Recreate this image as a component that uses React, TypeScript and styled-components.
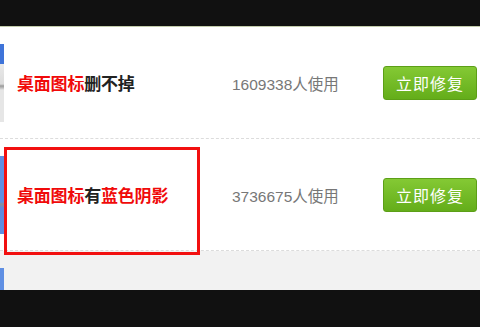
import React from "react";
import styled, { createGlobalStyle } from "styled-components";

const GlobalStyle = createGlobalStyle`
  html, body {
    margin: 0;
    padding: 0;
    background: #111;
  }
  * {
    box-sizing: border-box;
  }
`;

const Page = styled.div`
  width: 480px;
  height: 327px;
  display: flex;
  flex-direction: column;
  overflow: hidden;
  background: #fff;
  font-family: "Noto Sans CJK SC", "Liberation Sans", sans-serif;
`;

const TopBar = styled.div`
  height: 27px;
  flex: none;
  background: #111;
  border-bottom: 1px solid #c3ccab;
`;

const BottomBar = styled.div`
  height: 37px;
  flex: none;
  background: #111;
`;

const List = styled.div`
  flex: 1;
  overflow: hidden;
  display: flex;
  flex-direction: column;
`;

const Row = styled.div<{ $hover?: boolean }>`
  position: relative;
  flex: none;
  height: 112px;
  display: grid;
  grid-template-columns: 4px 228px 151px 94px;
  align-items: center;
  background: ${({ $hover }) => ($hover ? "#f2f2f2" : "#fff")};
  border-bottom: 1px dashed #dcdcdc;
`;

const Thumb = styled.div<{ $variant: number }>`
  width: 4px;
  height: 78px;
  background: ${({ $variant }) =>
    $variant === 0
      ? "linear-gradient(#3f74d9 0, #3f74d9 20px, #e9e9e9 20px, #dcdcdc 40px, #9a9a9a 42px, #e6e6e6 46px, #e6e6e6 100%)"
      : "linear-gradient(#5f8fe3 0, #5f8fe3 46px, #8a8f99 48px, #6089dc 52px, #5f8fe3 100%)"};
`;

const Title = styled.div`
  padding-left: 13px;
  font-size: 17px;
  font-weight: 700;
  color: #222;
  white-space: nowrap;
  letter-spacing: -0.2px;
`;

const Red = styled.span`
  color: #f00a0a;
`;

const Count = styled.div`
  font-family: "Liberation Sans", "Noto Sans CJK SC", sans-serif;
  font-size: 15.5px;
  color: #777;
  white-space: nowrap;
`;

const FixButton = styled.button`
  width: 94px;
  height: 34px;
  padding: 0;
  border: 1px solid #5c9f17;
  border-radius: 3px;
  background: linear-gradient(#84c934, #64ad1a);
  color: #fff;
  font-family: "Noto Sans CJK SC", sans-serif;
  font-size: 16px;
  letter-spacing: 1px;
  cursor: pointer;
`;

const Highlight = styled.div`
  position: absolute;
  left: 4px;
  top: 8px;
  width: 196px;
  height: 108px;
  border: 3px solid #f21010;
  pointer-events: none;
  z-index: 2;
`;

type Item = {
  title?: React.ReactNode;
  users?: string;
};

const items: Item[] = [
  {
    title: (
      <>
        <Red>桌面图标</Red>删不掉
      </>
    ),
    users: "1609338",
  },
  {
    title: (
      <>
        <Red>桌面图标</Red>有<Red>蓝色阴影</Red>
      </>
    ),
    users: "3736675",
  },
  // third row is only peeking in under the bottom bar
  {},
];

export default function App(): JSX.Element {
  return (
    <>
      <GlobalStyle />
      <Page>
        <TopBar />
        <List>
          {items.map((item, i) => (
            <Row key={i} $hover={i === 2}>
              <Thumb $variant={i === 0 ? 0 : 1} />
              <Title>{item.title}</Title>
              <Count>{item.users && `${item.users}人使用`}</Count>
              <FixButton>{item.users && "立即修复"}</FixButton>
              {i === 1 && <Highlight />}
            </Row>
          ))}
        </List>
        <BottomBar />
      </Page>
    </>
  );
}
